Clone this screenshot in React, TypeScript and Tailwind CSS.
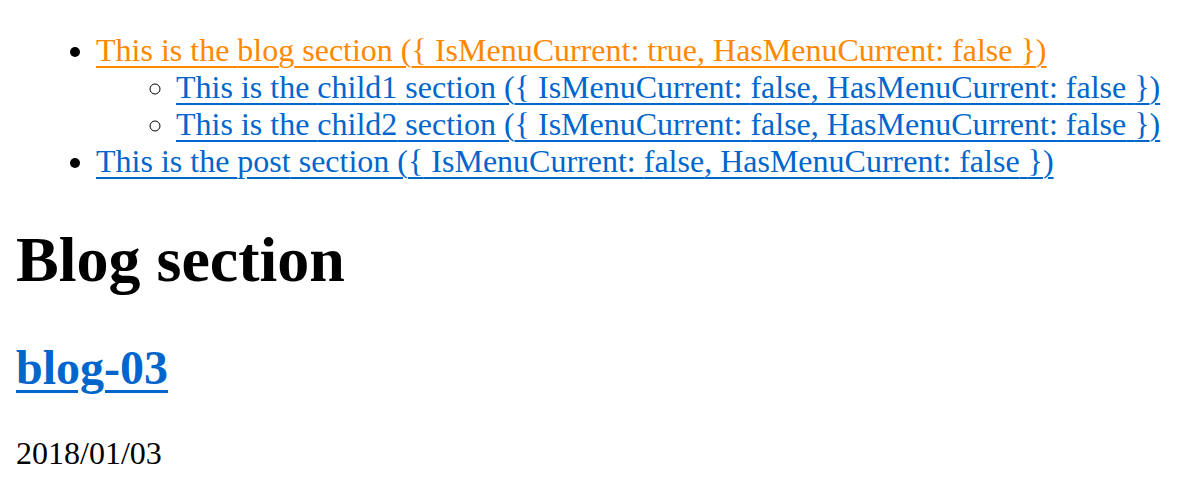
import React from 'react';

type Section = {
  name: string;
  current: boolean;
  hasCurrent: boolean;
  children?: Section[];
};

const menu: Section[] = [
  {
    name: 'blog',
    current: true,
    hasCurrent: false,
    children: [
      { name: 'child1', current: false, hasCurrent: false },
      { name: 'child2', current: false, hasCurrent: false },
    ],
  },
  { name: 'post', current: false, hasCurrent: false },
];

const MenuLink = ({ s }: { s: Section }) => (
  <a
    href="#"
    className={
      s.current
        ? 'text-[#ff8800] underline decoration-2 underline-offset-[5px]'
        : 'text-[#0066cc] underline decoration-2 underline-offset-[5px]'
    }
  >
    This is the {s.name} section ({'{'} IsMenuCurrent: {String(s.current)}, HasMenuCurrent:{' '}
    {String(s.hasCurrent)} {'}'})
  </a>
);

export default function App() {
  return (
    <div className="px-4 pt-px bg-white text-black font-['Liberation_Serif',serif] h-[480px] overflow-hidden">
      {/* Menu */}
      <ul className="mt-[31px] mb-8 pl-20 list-disc text-[32px] leading-[37px]">
        {menu.map((s) => (
          <li key={s.name}>
            <MenuLink s={s} />
            {s.children && (
              <ul className="pl-20 list-[circle]">
                {s.children.map((c) => (
                  <li key={c.name}>
                    <MenuLink s={c} />
                  </li>
                ))}
              </ul>
            )}
          </li>
        ))}
      </ul>

      <h1 className="mt-[43px] mb-[43px] text-[64px] leading-[74px] font-bold">Blog section</h1>

      <h2 className="mt-[40px] mb-[40px] text-[48px] leading-[55px] font-bold">
        <a href="#" className="text-[#0066cc] underline decoration-[3px] underline-offset-[6px]">
          blog-03
        </a>
      </h2>

      <p className="my-8 text-[32px] leading-[37px]">2018/01/03</p>
    </div>
  );
}
